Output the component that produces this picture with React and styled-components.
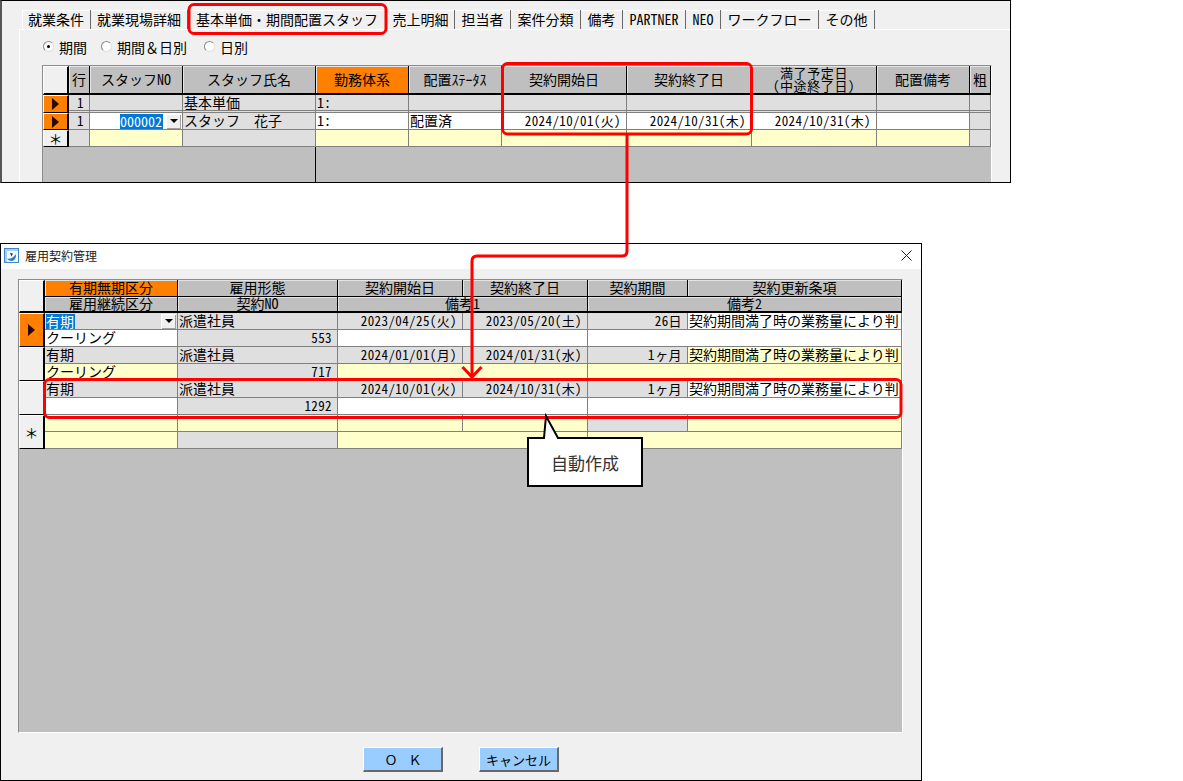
import styled, { createGlobalStyle } from 'styled-components';

const GlobalStyle = createGlobalStyle`
  html, body {
    margin: 0;
    padding: 0;
    background: #fff;
  }
  body {
    font-family: "Noto Sans CJK JP", "Noto Sans", sans-serif;
    font-size: 14px;
    font-feature-settings: "hwid";
    color: #000;
  }
`;

const Page = styled.div`
  position: relative;
  width: 1183px;
  height: 781px;
  overflow: hidden;
`;

const TopWindow = styled.div`
  box-sizing: border-box;
  width: 1011px;
  height: 183px;
  margin-bottom: 60px;
  border: 1px solid #000;
  border-left: 2px solid #555;
  background: #f0f0f0;
  overflow: hidden;
`;

const TabStrip = styled.div`
  display: flex;
  height: 19px;
  padding: 9px 0 0 20px;
`;

const Tab = styled.div`
  box-sizing: border-box;
  width: ${(p) => p.$width}px;
  height: 19px;
  border-right: 1px solid #696969;
  box-shadow: ${(p) => (p.$first ? 'inset 1px 1px 0 #fff' : 'inset 0 1px 0 #fff')};
  text-align: center;
  line-height: 19px;
  white-space: nowrap;
`;

const Panel = styled.div`
  box-sizing: border-box;
  height: 154px;
  margin-left: 17px;
  padding: 6px 0 0 22px;
  border-top: 1px solid #fff;
  border-left: 1px solid #fff;
`;

const RadioRow = styled.div`
  display: flex;
  align-items: center;
  height: 21px;
  margin-bottom: 8px;
  padding-left: 1px;
`;

const RadioLabel = styled.label`
  display: flex;
  align-items: center;
  gap: 5px;
  width: ${(p) => p.$width}px;
  font-feature-settings: normal;
  white-space: nowrap;
`;

const RadioMark = styled.span`
  box-sizing: border-box;
  display: flex;
  align-items: center;
  justify-content: center;
  width: 11px;
  height: 11px;
  border-radius: 50%;
  background: #fff;
  border: 1px solid;
  border-color: #8a8a8a #e0e0e0 #e0e0e0 #8a8a8a;

  &::after {
    content: '';
    width: 3px;
    height: 3px;
    border-radius: 50%;
    background: ${(p) => (p.$on ? '#000' : 'transparent')};
  }
`;

const Sheet = styled.div`
  box-sizing: border-box;
  display: grid;
  grid-template-columns: ${(p) => p.$columns};
  grid-template-rows: ${(p) => p.$rows};
  width: ${(p) => p.$width}px;
  height: ${(p) => p.$height}px;
  border: 1px solid;
  border-color: #8c8c8c #fff #fff #8c8c8c;
  background: #bfbfbf;
  overflow: hidden;
`;

const HeadCell = styled.div`
  box-sizing: border-box;
  display: flex;
  align-items: center;
  justify-content: center;
  grid-column: ${(p) => (p.$span ? `span ${p.$span}` : 'auto')};
  padding-bottom: 1px;
  background: ${(p) => (p.$orange ? '#ff8000' : '#bfbfbf')};
  border-right: 1px solid #000;
  border-bottom: ${(p) => (p.$last ? '2px' : '1px')} solid #000;
  box-shadow: inset 1px 1px 0 #e4e4e4;
  text-align: center;
  white-space: nowrap;
  line-height: 13px;
`;

const TwoLineLabel = styled.span`
  font-size: 13px;
  letter-spacing: 0.6px;
`;

const toneColors = {
  gray: '#dfdfdf',
  white: '#ffffff',
  yellow: '#ffffcc',
};

const Cell = styled.div`
  box-sizing: border-box;
  display: flex;
  align-items: center;
  justify-content: ${(p) => (p.$right ? 'flex-end' : 'flex-start')};
  grid-column: ${(p) => (p.$span ? `span ${p.$span}` : 'auto')};
  padding: ${(p) => (p.$right ? '0 5px 1px 0' : '0 0 1px 1px')};
  background: ${(p) => toneColors[p.$tone]};
  border-right: 1px solid #808080;
  border-bottom: ${(p) => (p.$double ? '3px double #808080' : '1px solid #808080')};
  font-size: ${(p) => (p.$num ? '13px' : '14px')};
  letter-spacing: ${(p) => (p.$num ? '0.4px' : '0')};
  font-feature-settings: ${(p) => (p.$wide ? 'normal' : '"hwid"')};
  white-space: nowrap;
  line-height: 15px;
`;

const RowMark = styled.div`
  box-sizing: border-box;
  display: flex;
  align-items: center;
  justify-content: center;
  grid-row: ${(p) => (p.$tall ? 'span 2' : 'auto')};
  background: ${(p) => (p.$orange ? '#ff8000' : '#f0f0f0')};
  border: 1px solid;
  border-color: #fff #000 #000 #fff;
  border-right-width: 2px;
`;

const CornerCell = styled(RowMark)`
  border-bottom-width: 2px;
`;

const Arrow = styled.span`
  width: 0;
  height: 0;
  border-top: 6px solid transparent;
  border-bottom: 6px solid transparent;
  border-left: 7px solid #2a0a00;
`;

const Star = styled.span`
  margin-bottom: 1px;
  font-size: 14px;
  line-height: 14px;
  font-feature-settings: normal;
`;

const Filler = styled.div`
  grid-column: ${(p) => `span ${p.$span}`};
  border-right: ${(p) => (p.$divider ? '1px solid #000' : 'none')};
`;

const Selected = styled.span`
  background: #0078d7;
  color: #fff;
  line-height: 15px;
  padding-right: 1px;
`;

const DropButton = styled.span`
  flex: none;
  display: flex;
  align-items: center;
  justify-content: center;
  width: 15px;
  height: 15px;
  margin-left: ${(p) => (p.$push ? 'auto' : '3px')};
  background: #f0f0f0;
  box-shadow: inset 1px 1px 0 #fff, inset -1px -1px 0 #a0a0a0;

  &::after {
    content: '';
    border-top: 4px solid #000;
    border-left: 4px solid transparent;
    border-right: 4px solid transparent;
  }
`;

const DropCell = styled(Cell)`
  padding: 0 1px;
  letter-spacing: 0;
`;

const Dialog = styled.div`
  box-sizing: border-box;
  display: flex;
  flex-direction: column;
  width: 922px;
  height: 538px;
  border: 1px solid #000;
  background: #f0f0f0;
`;

const TitleBar = styled.div`
  box-sizing: border-box;
  display: flex;
  align-items: center;
  gap: 6px;
  flex: none;
  height: 25px;
  padding: 0 9px 2px 3px;
  background: #fff;
  font-size: 12px;
  color: #222;
`;

const TitleText = styled.span`
  flex: 1;
`;

const DialogBody = styled.div`
  display: flex;
  flex-direction: column;
  flex: 1;
  padding: 10px 0 0 17px;
`;

const ButtonRow = styled.div`
  display: flex;
  justify-content: center;
  gap: 36px;
  margin: 14px 0 0 -17px;
`;

const Button = styled.button`
  box-sizing: border-box;
  width: 80px;
  height: 25px;
  padding: 0;
  background: #99ccff;
  border: 1px solid;
  border-color: #fff #696969 #696969 #fff;
  border-bottom-width: 2px;
  border-right-width: 2px;
  font: inherit;
  font-size: 13px;
  font-feature-settings: normal;
  letter-spacing: ${(p) => (p.$spread ? '-1px' : '0')};
  color: #000;
`;

const Overlay = styled.svg`
  position: absolute;
  top: 0;
  left: 0;
  pointer-events: none;
`;

const CalloutLabel = styled.div`
  position: absolute;
  top: 437px;
  left: 527px;
  display: flex;
  align-items: center;
  justify-content: center;
  width: 116px;
  height: 50px;
  font-size: 17px;
  color: #333;
`;

const tabs = [
  ['就業条件', 69],
  ['就業現場詳細', 97],
  ['基本単価・期間配置スタッフ', 199],
  ['売上明細', 68],
  ['担当者', 56],
  ['案件分類', 70],
  ['備考', 42],
  ['PARTNER', 63],
  ['NEO', 35],
  ['ワークフロー', 98],
  ['その他', 56],
];

const radios = [
  ['期間', 58, true],
  ['期間＆日別', 103, false],
  ['日別', 60, false],
];

const topColumns = '26px 21px 93px 133px 93px 93px 125px 125px 125px 93px 21px';
const dialogColumns = '26px 133px 160px 125px 125px 100px 214px';

const topHeads = [
  { label: '行' },
  { label: 'スタッフNO' },
  { label: 'スタッフ氏名' },
  { label: '勤務体系', orange: true },
  { label: '配置ｽﾃｰﾀｽ' },
  { label: '契約開始日' },
  { label: '契約終了日' },
  { label: <TwoLineLabel>満了予定日<br />(中途終了日)</TwoLineLabel> },
  { label: '配置備考' },
  { label: '粗' },
];

const dialogRows = [
  {
    orange: true,
    type: '',
    kind: '派遣社員',
    start: '2023/04/25(火)',
    end: '2023/05/20(土)',
    term: '26日',
    termsTone: 'white',
    cont: 'クーリング',
    no: '553',
    noteTone: 'white',
  },
  {
    type: '有期',
    kind: '派遣社員',
    start: '2024/01/01(月)',
    end: '2024/01/31(水)',
    term: '1ヶ月',
    termsTone: 'yellow',
    cont: 'クーリング',
    no: '717',
    noteTone: 'yellow',
  },
  {
    type: '有期',
    kind: '派遣社員',
    start: '2024/10/01(火)',
    end: '2024/10/31(木)',
    term: '1ヶ月',
    termsTone: 'white',
    cont: '',
    no: '1292',
    noteTone: 'white',
  },
];

function TopGrid() {
  return (
    <Sheet $columns={topColumns} $rows="29px 18px 17px 17px 1fr" $width={950} $height={118}>
      <CornerCell />
      {topHeads.map((h, i) => (
        <HeadCell key={i} $orange={h.orange} $last>
          <span>{h.label}</span>
        </HeadCell>
      ))}

      <RowMark $orange><Arrow /></RowMark>
      <Cell $tone="gray" $right $num $double>1</Cell>
      <Cell $tone="gray" $double />
      <Cell $tone="gray" $double>基本単価</Cell>
      <Cell $tone="gray" $double>1:</Cell>
      {[0, 1, 2, 3, 4, 5].map((i) => <Cell key={i} $tone="gray" $double />)}

      <RowMark $orange><Arrow /></RowMark>
      <Cell $tone="gray" $right $num>1</Cell>
      <DropCell $tone="white" $right>
        <Selected>000002</Selected>
        <DropButton />
      </DropCell>
      <Cell $tone="gray" $wide>スタッフ　花子</Cell>
      <Cell $tone="white">1:</Cell>
      <Cell $tone="white">配置済</Cell>
      <Cell $tone="white" $right $num>2024/10/01(火)</Cell>
      <Cell $tone="white" $right $num>2024/10/31(木)</Cell>
      <Cell $tone="white" $right $num>2024/10/31(木)</Cell>
      <Cell $tone="white" />
      <Cell $tone="gray" />

      <RowMark><Star>＊</Star></RowMark>
      <Cell $tone="gray" />
      <Cell $tone="yellow" />
      <Cell $tone="gray" />
      {[0, 1, 2, 3, 4, 5].map((i) => <Cell key={i} $tone="yellow" />)}
      <Cell $tone="gray" />

      <Filler $span={4} $divider />
      <Filler $span={7} />
    </Sheet>
  );
}

function DialogGrid() {
  return (
    <Sheet
      $columns={dialogColumns}
      $rows="17px 16px repeat(8, 17px) 1fr"
      $width={885}
      $height={454}
    >
      <CornerCell $tall />
      <HeadCell $orange>有期無期区分</HeadCell>
      <HeadCell>雇用形態</HeadCell>
      <HeadCell>契約開始日</HeadCell>
      <HeadCell>契約終了日</HeadCell>
      <HeadCell>契約期間</HeadCell>
      <HeadCell>契約更新条項</HeadCell>
      <HeadCell $last>雇用継続区分</HeadCell>
      <HeadCell $last>契約NO</HeadCell>
      <HeadCell $span={2} $last>備考1</HeadCell>
      <HeadCell $span={2} $last>備考2</HeadCell>

      {dialogRows.map((r, i) => [
        <RowMark key={`m${i}`} $tall $orange={r.orange}>{r.orange && <Arrow />}</RowMark>,
        r.orange ? (
          <DropCell key={`t${i}`} $tone="gray">
            <Selected>有期</Selected>
            <DropButton $push />
          </DropCell>
        ) : (
          <Cell key={`t${i}`} $tone="gray">{r.type}</Cell>
        ),
        <Cell key={`k${i}`} $tone="gray">{r.kind}</Cell>,
        <Cell key={`s${i}`} $tone="gray" $right $num>{r.start}</Cell>,
        <Cell key={`e${i}`} $tone="gray" $right $num>{r.end}</Cell>,
        <Cell key={`p${i}`} $tone="gray" $right $num $wide={r.term !== '26日'}>{r.term}</Cell>,
        <Cell key={`c${i}`} $tone={r.termsTone}>契約期間満了時の業務量により判</Cell>,
        <Cell key={`u${i}`} $tone={r.noteTone}>{r.cont}</Cell>,
        <Cell key={`n${i}`} $tone="gray" $right $num>{r.no}</Cell>,
        <Cell key={`a${i}`} $tone={r.noteTone} $span={2} />,
        <Cell key={`b${i}`} $tone={r.noteTone} $span={2} />,
      ])}

      <RowMark $tall><Star>＊</Star></RowMark>
      <Cell $tone="yellow" />
      <Cell $tone="yellow" />
      <Cell $tone="yellow" />
      <Cell $tone="yellow" />
      <Cell $tone="gray" />
      <Cell $tone="yellow" />
      <Cell $tone="yellow" />
      <Cell $tone="gray" />
      <Cell $tone="yellow" $span={2} />
      <Cell $tone="yellow" $span={2} />

      <Filler $span={7} />
    </Sheet>
  );
}

function AppIcon() {
  return (
    <svg width="15" height="15" viewBox="0 0 15 15">
      <rect x="0.5" y="0.5" width="14" height="14" fill="#f4f9fe" stroke="#3f86c8" />
      <path d="M1 1h13v2H3v11H1z" fill="#a9cdef" />
      <path d="M3 10.500c3 1 6.500-.5 9-4.500 .5 3.500-1.500 7-4.500 7-2 0-3.500-1-4.500-2.500z" fill="#2b7cc7" />
      <path d="M6 5l3 .5-1.500 3z" fill="#1d2f6f" />
    </svg>
  );
}

function CloseIcon() {
  return (
    <svg width="11" height="11" viewBox="0 0 11 11">
      <path d="M0.5 0.500l10 10M10.500 0.500l-10 10" stroke="#222" strokeWidth="1" fill="none" />
    </svg>
  );
}

function Annotations() {
  return (
    <Overlay width="1183" height="781" viewBox="0 0 1183 781">
      <g fill="none" stroke="#ff0000" strokeWidth="3">
        <rect x="189" y="4.500" width="197" height="29" rx="5" />
        <rect x="502.500" y="63.500" width="249" height="70.500" rx="5" />
        <rect x="44.500" y="379.500" width="856.500" height="38" rx="5" />
        <path d="M627 135V251q0 5-5 5H477q-5 0-5 5V377" />
        <path d="M462.500 367l9.500 10 9.500-10" />
      </g>
      <path
        d="M528 438H544L546 416 558 438H642V486H528Z"
        fill="#fff"
        stroke="#000"
        strokeWidth="2"
      />
    </Overlay>
  );
}

export default function App() {
  return (
    <Page>
      <GlobalStyle />
      <TopWindow>
        <TabStrip>
          {tabs.map(([label, width], i) => (
            <Tab key={label} $width={width} $first={i === 0}>{label}</Tab>
          ))}
        </TabStrip>
        <Panel>
          <RadioRow>
            {radios.map(([label, width, on]) => (
              <RadioLabel key={label} $width={width}>
                <RadioMark $on={on} />
                {label}
              </RadioLabel>
            ))}
          </RadioRow>
          <TopGrid />
        </Panel>
      </TopWindow>

      <Dialog>
        <TitleBar>
          <AppIcon />
          <TitleText>雇用契約管理</TitleText>
          <CloseIcon />
        </TitleBar>
        <DialogBody>
          <DialogGrid />
          <ButtonRow>
            <Button $spread>Ｏ　Ｋ</Button>
            <Button>キャンセル</Button>
          </ButtonRow>
        </DialogBody>
      </Dialog>

      <Annotations />
      <CalloutLabel>自動作成</CalloutLabel>
    </Page>
  );
}
